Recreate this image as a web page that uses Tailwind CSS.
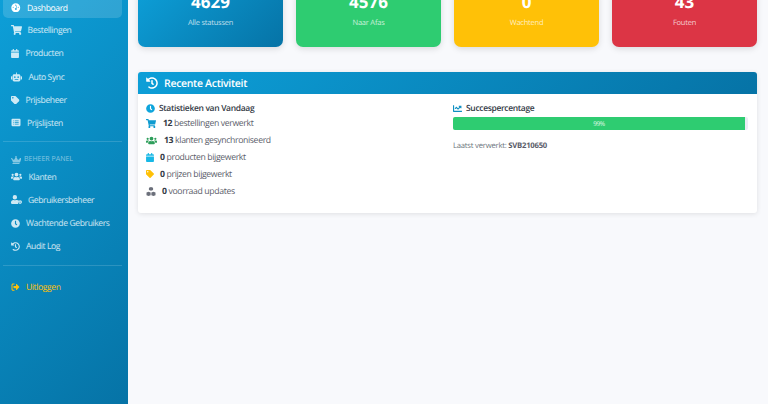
<!DOCTYPE html>
<html lang="nl">
<head>
  <meta charset="UTF-8">
  <title>Dashboard</title>
  <script src="https://cdn.jsdelivr.net/npm/@tailwindcss/browser@4"></script>
</head>
<body class="bg-[#f8f9fc] h-[404px] w-[768px] overflow-hidden flex font-['Open_Sans',sans-serif] [text-rendering:geometricPrecision] tracking-[-0.042em] text-[8.7px] text-[#5a5c69] whitespace-nowrap">

  <svg class="hidden">
    <symbol id="cart" viewBox="0 0 576 512"><path fill="currentColor" d="M528.12 301.319l47.273-208C578.806 78.301 567.391 64 551.99 64H159.208l-9.166-44.81C147.758 8.021 137.93 0 126.529 0H24C10.745 0 0 10.745 0 24v16c0 13.255 10.745 24 24 24h69.883l70.248 343.435C147.325 417.1 136 435.222 136 456c0 30.928 25.072 56 56 56s56-25.072 56-56c0-15.674-6.447-29.835-16.824-40h209.647C430.447 426.165 424 440.326 424 456c0 30.928 25.072 56 56 56s56-25.072 56-56c0-22.172-12.888-41.332-31.579-50.405l5.517-24.276c3.413-15.018-8.002-29.319-23.403-29.319H218.117l-6.545-32h293.145c11.206 0 20.92-7.754 23.403-18.681z"/></symbol>
    <symbol id="tag" viewBox="0 0 512 512"><path fill="currentColor" d="M0 252.118V48C0 21.49 21.49 0 48 0h204.118a48 48 0 0 1 33.941 14.059l211.882 211.882c18.745 18.745 18.745 49.137 0 67.882L293.823 497.941c-18.745 18.745-49.137 18.745-67.882 0L14.059 286.059A48 48 0 0 1 0 252.118zM112 64c-26.51 0-48 21.49-48 48s21.49 48 48 48 48-21.49 48-48-21.49-48-48-48z"/></symbol>
    <symbol id="clock" viewBox="0 0 512 512"><path fill="currentColor" d="M256,8C119,8,8,119,8,256S119,504,256,504,504,393,504,256,393,8,256,8Zm92.49,313h0l-20,25a16,16,0,0,1-22.49,2.5h0l-67-49.72a40,40,0,0,1-15-31.23V112a16,16,0,0,1,16-16h32a16,16,0,0,1,16,16V256l58,42.5A16,16,0,0,1,348.49,321Z"/></symbol>
    <symbol id="history" viewBox="0 0 512 512"><path fill="currentColor" d="M504 255.531c.253 136.64-111.18 248.372-247.82 248.468-59.015.042-113.223-20.53-155.822-54.911-11.077-8.94-11.905-25.541-1.839-35.607l11.267-11.267c8.609-8.609 22.353-9.551 31.891-1.984C173.062 425.135 212.781 440 256 440c101.705 0 184-82.311 184-184 0-101.705-82.311-184-184-184-48.814 0-93.149 18.969-126.068 49.932l50.754 50.754c10.08 10.08 2.941 27.314-11.313 27.314H24c-8.837 0-16-7.163-16-16V38.627c0-14.254 17.234-21.393 27.314-11.314l49.372 49.372C129.209 34.136 189.552 8 256 8c136.81 0 247.747 110.78 248 247.531zm-180.912 78.784l9.823-12.63c8.138-10.463 6.253-25.542-4.21-33.679L288 256.349V152c0-13.255-10.745-24-24-24h-16c-13.255 0-24 10.745-24 24v135.651l65.409 50.874c10.463 8.137 25.541 6.253 33.679-4.21z"/></symbol>
    <symbol id="box" viewBox="0 0 448 512"><path fill="currentColor" d="M12 192h424c6.600 0 12 5.400 12 12v260c0 26.500-21.500 48-48 48H48c-26.500 0-48-21.500-48-48V204c0-6.600 5.400-12 12-12zm436-44v-36c0-26.500-21.500-48-48-48h-48V12c0-6.600-5.400-12-12-12h-40c-6.600 0-12 5.400-12 12v52H160V12c0-6.600-5.400-12-12-12h-40c-6.600 0-12 5.400-12 12v52H48C21.500 64 0 85.500 0 112v36c0 6.600 5.400 12 12 12h424c6.600 0 12-5.400 12-12z"/></symbol>
    <symbol id="users" viewBox="0 0 640 512"><path fill="currentColor" d="M96 224a64 64 0 1 0 0-128 64 64 0 0 0 0 128zm448 0a64 64 0 1 0 0-128 64 64 0 0 0 0 128zm32 32h-64c-17.600 0-33.500 7.100-45.100 18.600 40.300 22.100 68.900 62 75.100 109.400h66c17.700 0 32-14.300 32-32v-32c0-35.300-28.700-64-64-64zm-256 0a112 112 0 1 0 0-224 112 112 0 0 0 0 224zm76.800 32h-8.300c-20.800 10-43.900 16-68.500 16s-47.600-6-68.500-16h-8.300C179.600 288 128 339.600 128 403.200V432c0 26.500 21.500 48 48 48h288c26.500 0 48-21.500 48-48v-28.800c0-63.600-51.600-115.200-115.200-115.200zm-223.700-13.400C161.500 263.100 145.600 256 128 256H64c-35.300 0-64 28.700-64 64v32c0 17.700 14.300 32 32 32h65.900c6.300-47.400 34.900-87.300 75.200-109.400z"/></symbol>
  </svg>

  <!-- Sidebar -->
  <aside class="w-[128px] h-full shrink-0 bg-[linear-gradient(135deg,#0d9fd8,#0673a6)] pl-[3px] pr-[6px] text-white/80 text-[8.6px] tracking-[-0.048em]">
    <nav class="flex flex-col -mt-[5.500px]">
      <a class="h-[23px] mb-[0.2px] pt-[3px] flex items-center gap-[6.500px] pl-[8px] rounded-[5px] bg-white/15 text-white">
        <svg class="w-[9.500px] h-[9.500px] shrink-0" viewBox="0 0 512 512"><path fill="currentColor" fill-rule="evenodd" d="M256 16a240 240 0 1 0 0 480 240 240 0 0 0 0-480zm0 70a30 30 0 1 1 0 60 30 30 0 0 1 0-60zM120 200a30 30 0 1 1 0 60 30 30 0 0 1 0-60zm272 0a30 30 0 1 1 0 60 30 30 0 0 1 0-60zM300 140l28 10-40 130a50 50 0 1 1-28-8z"/></svg>
        <span class="mt-[1px]">Dashboard</span>
      </a>
      <a class="h-[23px] mb-[0.2px] pt-[2px] flex items-center gap-[5.500px] pl-[8px]">
        <svg class="w-[11px] h-[10px] shrink-0"><use href="#cart"/></svg>
        <span class="mt-[1px]">Bestellingen</span>
      </a>
      <a class="h-[23px] mb-[0.2px] pt-[2px] flex items-center gap-[6.500px] pl-[8px]">
        <svg class="w-[8px] h-[9px] shrink-0"><use href="#box"/></svg>
        <span class="mt-[1px]">Producten</span>
      </a>
      <a class="h-[23px] mb-[0.2px] pt-[2px] flex items-center gap-[6.500px] pl-[8px]">
        <svg class="w-[11px] h-[10px] shrink-0" viewBox="0 0 640 512"><path fill="currentColor" fill-rule="evenodd" d="M296 0h48v96h120c44 0 80 36 80 80v256c0 44-36 80-80 80H176c-44 0-80-36-80-80V176c0-44 36-80 80-80h120zM224 216a48 48 0 1 0 0 96 48 48 0 0 0 0-96zm192 0a48 48 0 1 0 0 96 48 48 0 0 0 0-96zM216 384v40h208v-40zM32 208h40v192H32c-18 0-32-14-32-32V240c0-18 14-32 32-32zm536 0h40c18 0 32 14 32 32v128c0 18-14 32-32 32h-40z"/></svg>
        <span class="mt-[1px]">Auto Sync</span>
      </a>
      <a class="h-[23px] mb-[0.2px] pt-[2px] flex items-center gap-[6px] pl-[8px]">
        <svg class="w-[8.500px] h-[8.500px] shrink-0"><use href="#tag"/></svg>
        <span class="mt-[1px]">Prijsbeheer</span>
      </a>
      <a class="h-[23px] mb-[0.2px] pt-[2px] flex items-center gap-[6px] pl-[8px]">
        <svg class="w-[10px] h-[9px] shrink-0" viewBox="0 0 512 512"><path fill="currentColor" fill-rule="evenodd" d="M48 48h416c26 0 48 22 48 48v320c0 26-22 48-48 48H48c-26 0-48-22-48-48V96c0-26 22-48 48-48zm56 100v40h50v-40zm0 90v40h50v-40zm0 90v40h50v-40zm90-180v40h214v-40zm0 90v40h214v-40zm0 90v40h214v-40z"/></svg>
        <span class="mt-[1px]">Prijslijsten</span>
      </a>
    </nav>

    <div class="mt-[7.500px] border-t border-white/15"></div>

    <div class="mt-[13px] h-[10px] pl-[8px] flex items-center gap-[3px] text-[7px] tracking-normal text-white/50">
      <svg class="w-[10px] h-[8px] shrink-0" viewBox="0 0 640 512"><path fill="currentColor" d="M528 448H112c-9 0-16 7-16 16v32c0 9 7 16 16 16h416c9 0 16-7 16-16v-32c0-9-7-16-16-16zm64-320a48 48 0 0 0-48 48c0 7 2 14 4 20l-72 44c-15 9-35 4-44-12l-82-143a48 48 0 1 0-60 0l-82 143c-9 16-29 21-44 12l-72-44c3-6 4-13 4-20a48 48 0 1 0-48 48c3 0 5 0 8-1l72 193h448l72-193c3 1 5 1 8 1a48 48 0 0 0 0-96z"/></svg>
      <span>BEHEER PANEL</span>
    </div>

    <nav class="flex flex-col">
      <a class="h-[23px] mb-[0.2px] flex items-center gap-[6.500px] pl-[8px]">
        <svg class="w-[11px] h-[9px] shrink-0"><use href="#users"/></svg>
        <span class="mt-[1px]">Klanten</span>
      </a>
      <a class="h-[23px] mb-[0.2px] flex items-center gap-[6px] pl-[8px]">
        <svg class="w-[11px] h-[9px] shrink-0" viewBox="0 0 640 512"><path fill="currentColor" d="M224 256a128 128 0 1 0 0-256 128 128 0 0 0 0 256zm90 32h-17c-22 10-47 16-73 16s-51-6-73-16h-17C60 288 0 348 0 422v42c0 26 22 48 48 48h352c8 0 16-2 22-6-9-22-14-50-14-74 0-40 14-78 38-108-30-22-66-36-132-36zM528 300a112 106 0 1 0 0 212 112 106 0 0 0 0-212zm0 70a36 36 0 1 1 0 72 36 36 0 0 1 0-72z"/></svg>
        <span class="mt-[1px]">Gebruikersbeheer</span>
      </a>
      <a class="h-[23px] mb-[0.2px] flex items-center gap-[6px] pl-[8px]">
        <svg class="w-[9px] h-[9px] shrink-0"><use href="#clock"/></svg>
        <span>Wachtende Gebruikers</span>
      </a>
      <a class="h-[23px] mb-[0.2px] flex items-center gap-[6px] pl-[8px]">
        <svg class="w-[9px] h-[9px] shrink-0"><use href="#history"/></svg>
        <span>Audit Log</span>
      </a>
    </nav>

    <div class="mt-[6.900px] border-t border-white/15"></div>

    <a class="mt-[10px] h-[23px] flex items-center gap-[6px] pl-[8px] text-[#ffc107]">
      <svg class="w-[9px] h-[8px] shrink-0" viewBox="0 0 512 512"><path fill="currentColor" d="M497 273L329 441c-15 15-41 4-41-17v-96H152c-13 0-24-11-24-24v-96c0-13 11-24 24-24h136V88c0-21 26-32 41-17l168 168c9 10 9 24 0 34zM192 436v40c0 7-5 12-12 12H96c-53 0-96-43-96-96V120c0-53 43-96 96-96h84c7 0 12 5 12 12v40c0 7-5 12-12 12H96c-18 0-32 14-32 32v272c0 18 14 32 32 32h84c7 0 12 5 12 12z"/></svg>
      <span>Uitloggen</span>
    </a>
  </aside>

  <!-- Main -->
  <main class="flex-1 pl-[10px] pr-[11px]">
    <div class="grid grid-cols-4 gap-[13px] -mt-[13px] text-white text-center">
      <div class="h-[60px] rounded-[7px] shadow-[0_2px_6px_rgba(0,0,0,0.12)] bg-[linear-gradient(135deg,#0d9fd8,#0673a6)] flex flex-col items-center">
        <div class="text-[17px] tracking-normal font-bold leading-[30px]">4629</div>
        <div class="text-[7.500px] tracking-[-0.03em] text-white/75 leading-[14px] -mt-[1px]">Alle statussen</div>
      </div>
      <div class="h-[60px] rounded-[7px] shadow-[0_2px_6px_rgba(0,0,0,0.12)] bg-[#2ecc71] flex flex-col items-center">
        <div class="text-[17px] tracking-normal font-bold leading-[30px]">4576</div>
        <div class="text-[7.500px] tracking-[-0.03em] text-white/75 leading-[14px] -mt-[1px]">Naar Afas</div>
      </div>
      <div class="h-[60px] rounded-[7px] shadow-[0_2px_6px_rgba(0,0,0,0.12)] bg-[#ffc107] flex flex-col items-center">
        <div class="text-[17px] tracking-normal font-bold leading-[30px]">0</div>
        <div class="text-[7.500px] tracking-[-0.03em] text-white/75 leading-[14px] -mt-[1px]">Wachtend</div>
      </div>
      <div class="h-[60px] rounded-[7px] shadow-[0_2px_6px_rgba(0,0,0,0.12)] bg-[#dc3545] flex flex-col items-center">
        <div class="text-[17px] tracking-normal font-bold leading-[30px]">43</div>
        <div class="text-[7.500px] tracking-[-0.03em] text-white/75 leading-[14px] -mt-[1px]">Fouten</div>
      </div>
    </div>

    <section class="mt-[25px] h-[141px] bg-white rounded-[3px] shadow-[0_1px_5px_rgba(0,0,0,0.1)] overflow-hidden">
      <header class="h-[22px] bg-[linear-gradient(135deg,#0d9fd8,#0673a6)] flex items-center gap-[6px] px-[8px] text-white">
        <svg class="w-[12px] h-[12px] shrink-0"><use href="#history"/></svg>
        <h2 class="text-[10.500px] tracking-[-0.03em] pt-[4px] font-semibold">Recente Activiteit</h2>
      </header>
      <div class="flex pl-[8px] pt-[9px]">
        <div class="w-[307px]">
          <div class="flex items-center gap-[4px] h-[13px] font-semibold text-[#333a45] text-[8.500px] tracking-[-0.04em]">
            <svg class="w-[9px] h-[9px] -mt-[2px] shrink-0 text-[#0ea5dc]"><use href="#clock"/></svg>
            <span>Statistieken van Vandaag</span>
          </div>
          <div class="flex flex-col -mt-[0.5px] text-[#5a5c69]">
            <div class="h-[17px] flex items-center gap-[7px]">
              <svg class="w-[10px] h-[9px] -mt-[2px] shrink-0 text-[#0e9bd0]"><use href="#cart"/></svg>
              <span><b class="text-[#333a45]">12</b> bestellingen verwerkt</span>
            </div>
            <div class="h-[17px] flex items-center gap-[7px]">
              <svg class="w-[11px] h-[9px] -mt-[2px] shrink-0 text-[#2e9e5b]"><use href="#users"/></svg>
              <span><b class="text-[#333a45]">13</b> klanten gesynchroniseerd</span>
            </div>
            <div class="h-[17px] flex items-center gap-[6px]">
              <svg class="w-[8px] h-[9px] -mt-[2px] shrink-0 text-[#17b8e6]"><use href="#box"/></svg>
              <span><b class="text-[#333a45]">0</b> producten bijgewerkt</span>
            </div>
            <div class="h-[17px] flex items-center gap-[6px]">
              <svg class="w-[8px] h-[8px] -mt-[2px] shrink-0 text-[#ffc107]"><use href="#tag"/></svg>
              <span><b class="text-[#333a45]">0</b> prijzen bijgewerkt</span>
            </div>
            <div class="h-[17px] flex items-center gap-[6px]">
              <svg class="w-[10px] h-[9px] -mt-[2px] shrink-0 text-[#6b6f7a]" viewBox="0 0 512 512"><path fill="currentColor" d="M256 0l118 44v124l-118 44-118-44V44zM118 264l118 44v160l-118 44L0 468V308zm276 0l118 44v160l-118 44-118-44V308z"/></svg>
              <span><b class="text-[#333a45]">0</b> voorraad updates</span>
            </div>
          </div>
        </div>
        <div class="w-[295px]">
          <div class="flex items-center gap-[4px] h-[13px] font-semibold text-[#333a45] text-[8.500px] tracking-[-0.04em]">
            <svg class="w-[9px] h-[9px] -mt-[2px] shrink-0 text-[#0e8fc2]" viewBox="0 0 512 512"><path fill="currentColor" d="M496 384H64V80c0-8.84-7.16-16-16-16H16C7.16 64 0 71.16 0 80v336c0 17.67 14.33 32 32 32h464c8.84 0 16-7.16 16-16v-32c0-8.84-7.16-16-16-16zM464 96H345.94c-21.38 0-32.09 25.85-16.97 40.97l32.4 32.4L288 242.75l-73.37-73.37c-12.5-12.5-32.76-12.5-45.25 0l-68.69 68.69c-6.25 6.25-6.25 16.38 0 22.63l22.62 22.62c6.25 6.25 16.38 6.25 22.63 0L192 237.25l73.37 73.37c12.5 12.5 32.76 12.5 45.25 0l96-96 32.4 32.4c15.12 15.12 40.97 4.41 40.97-16.97V112c0-8.84-7.16-16-16-16z"/></svg>
            <span>Succespercentage</span>
          </div>
          <div class="h-[13px] mt-[1px] rounded-[2px] bg-[#eaecf4] overflow-hidden">
            <div class="h-full w-[99%] pt-[1px] bg-[#2ecc71] flex items-center justify-center text-white/85 text-[6.500px]">99%</div>
          </div>
          <div class="mt-[10.500px] text-[7.700px] tracking-[-0.03em] leading-[11px] text-[#6c757d]">Laatst verwerkt: <b class="text-[#5a5c69]">SVB210650</b></div>
        </div>
      </div>
    </section>
  </main>

</body>
</html>
